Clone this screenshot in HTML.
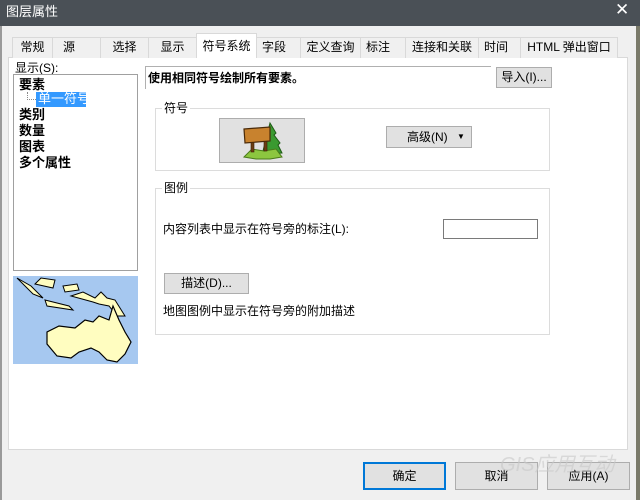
<!DOCTYPE html><html><head><meta charset="utf-8"><style>
body{margin:0;width:640px;height:500px;background:#f0f0f0;font-family:"Liberation Sans","Noto Sans CJK SC",sans-serif;font-size:12px;color:#000;position:relative;overflow:hidden}
div,span{position:absolute;box-sizing:border-box}
.t{white-space:nowrap;line-height:14px}
.tab{top:37px;height:21px;border:1px solid #d9d9d9;border-bottom:none;background:#f0f0f0;text-align:center;line-height:19px}
.btn{background:#e1e1e1;border:1px solid #adadad;text-align:center}
.grp{border:1px solid #dcdcdc}
</style></head><body>
<div style="left:0;top:0;width:640px;height:26px;background:#4a5056"></div>
<div class="t" style="left:6px;top:5px;color:#fff;font-size:13px">图层属性</div>
<div class="t" style="left:615px;top:3px;color:#fff;font-size:17px">✕</div>
<div style="left:636px;top:26px;width:4px;height:474px;background:#7a7a6a"></div>
<div style="left:0;top:26px;width:2px;height:474px;background:#9a9a9a"></div>

<div style="left:8px;top:57px;width:620px;height:393px;background:#fff;border:1px solid #d9d9d9"></div>
<div class="tab" style="left:12px;width:41px">常规</div>
<div class="tab" style="left:52px;width:49px;text-align:left;padding-left:10px">源</div>
<div class="tab" style="left:100px;width:49px">选择</div>
<div class="tab" style="left:148px;width:49px">显示</div>
<div class="tab" style="left:196px;top:33px;height:25px;width:61px;background:#fff;line-height:25px">符号系统</div>
<div class="tab" style="left:256px;width:45px;text-align:left;padding-left:5px">字段</div>
<div class="tab" style="left:300px;width:61px">定义查询</div>
<div class="tab" style="left:360px;width:46px;text-align:left;padding-left:5px">标注</div>
<div class="tab" style="left:405px;width:74px">连接和关联</div>
<div class="tab" style="left:478px;width:43px;text-align:left;padding-left:5px">时间</div>
<div class="tab" style="left:520px;width:98px">HTML 弹出窗口</div>

<div class="t" style="left:15px;top:61px">显示(S):</div>
<div style="left:13px;top:74px;width:125px;height:197px;background:#fff;border:1px solid #a0a0a0"></div>
<div class="t" style="left:19px;top:78px;font-weight:bold;font-size:13px">要素</div>
<div style="left:27px;top:92px;width:1px;height:8px;border-left:1px dotted #888"></div>
<div style="left:27px;top:99px;width:9px;height:1px;border-top:1px dotted #888"></div>
<div class="t" style="left:36px;top:92px;width:50px;height:15px;background:#3399ff;color:#fff;padding-left:2px;font-size:13px">单一符号</div>
<div class="t" style="left:19px;top:108px;font-weight:bold;font-size:13px">类别</div>
<div class="t" style="left:19px;top:124px;font-weight:bold;font-size:13px">数量</div>
<div class="t" style="left:19px;top:140px;font-weight:bold;font-size:13px">图表</div>
<div class="t" style="left:19px;top:156px;font-weight:bold;font-size:13px">多个属性</div>

<svg style="position:absolute;left:13px;top:276px" width="125" height="88" viewBox="0 0 125 88">
<rect width="125" height="88" fill="#a6c8f0"/>
<path d="M4 2 L20 18 L30 22 L18 10Z M22 8 L40 12 L42 4 L28 2Z M50 10 L64 8 L66 14 L52 16Z M58 20 L70 16 L82 22 L88 16 L94 22 L102 24 L112 40 L104 40 L96 30 L86 28 L80 26 Z M32 24 L56 30 L60 34 L34 30Z" fill="#fffdc0" stroke="#000" stroke-width="1"/>
<path d="M62 52 L72 44 L80 46 L86 40 L96 44 L100 30 L106 44 L112 56 L118 66 L112 78 L104 86 L94 84 L86 76 L78 72 L66 76 L58 82 L44 80 L34 68 L34 56 L46 50 Z" fill="#fffdc0" stroke="#000" stroke-width="1.2"/>
</svg>

<div style="left:145px;top:66px;width:346px;height:23px;border-top:1px solid #b0b0b0;border-left:1px solid #b0b0b0"></div>
<div class="t" style="left:148px;top:71px;font-weight:bold;font-size:12px">使用相同符号绘制所有要素。</div>
<div class="btn t" style="left:496px;top:67px;width:56px;height:21px;line-height:19px">导入(I)...</div>

<div class="grp" style="left:155px;top:108px;width:395px;height:63px"></div>
<div class="t" style="left:162px;top:101px;background:#fff;padding:0 2px">符号</div>
<div class="btn" style="left:219px;top:118px;width:86px;height:45px;background:#e1e1e1"></div>
<svg style="position:absolute;left:240px;top:121px" width="44" height="40" viewBox="0 0 44 40">
<path d="M30 2 L36 12 L34 14 L40 22 L38 24 L42 32 L22 34 Z" fill="#3a9a30" stroke="#1d5a14"/>
<path d="M4 36 L12 28 L24 30 L36 28 L42 36 L30 38 L16 38Z" fill="#8cc63f" stroke="#4a7a1a"/>
<rect x="11" y="16" width="3" height="15" fill="#6b3d12" stroke="#3a1e06" stroke-width=".6"/>
<rect x="24" y="16" width="3" height="14" fill="#6b3d12" stroke="#3a1e06" stroke-width=".6"/>
<path d="M4 8 L30 6 L30 20 L5 22 Z" fill="#c8822e" stroke="#4a2a08" stroke-width="1.2"/>
</svg>
<div class="btn t" style="left:386px;top:126px;width:86px;height:22px;line-height:20px;text-align:left;padding-left:20px">高级(N)<span style="left:70px;top:0;font-size:8px">▼</span></div>

<div class="grp" style="left:155px;top:188px;width:395px;height:147px"></div>
<div class="t" style="left:162px;top:181px;background:#fff;padding:0 2px">图例</div>
<div class="t" style="left:163px;top:222px">内容列表中显示在符号旁的标注(L):</div>
<div style="left:443px;top:219px;width:95px;height:20px;border:1px solid #7a7a7a;background:#fff"></div>
<div class="btn t" style="left:164px;top:273px;width:85px;height:21px;line-height:19px">描述(D)...</div>
<div class="t" style="left:163px;top:304px">地图图例中显示在符号旁的附加描述</div>

<div class="btn t" style="left:363px;top:462px;width:83px;height:28px;line-height:24px;border:2px solid #0078d7">确定</div>
<div class="btn t" style="left:455px;top:462px;width:83px;height:28px;line-height:26px">取消</div>
<div class="btn t" style="left:547px;top:462px;width:83px;height:28px;line-height:26px">应用(A)</div>
<div class="t" style="left:500px;top:458px;font-size:20px;color:rgba(200,200,200,.6);font-style:italic">GIS应用互动</div>
</body></html>
